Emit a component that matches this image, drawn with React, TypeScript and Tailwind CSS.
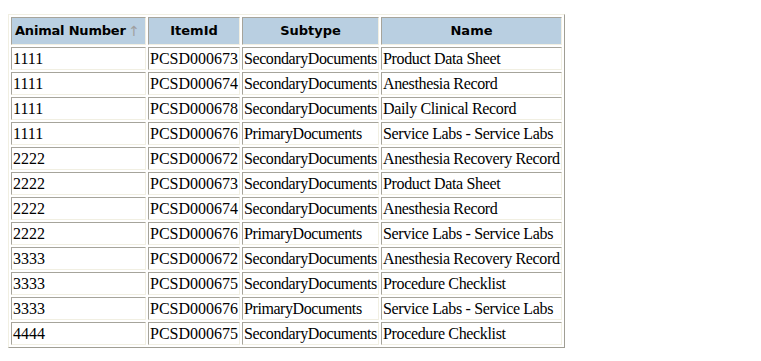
import React from 'react';

const rows: [string, string, string, string][] = [
  ['1111', 'PCSD000673', 'SecondaryDocuments', 'Product Data Sheet'],
  ['1111', 'PCSD000674', 'SecondaryDocuments', 'Anesthesia Record'],
  ['1111', 'PCSD000678', 'SecondaryDocuments', 'Daily Clinical Record'],
  ['1111', 'PCSD000676', 'PrimaryDocuments', 'Service Labs - Service Labs'],
  ['2222', 'PCSD000672', 'SecondaryDocuments', 'Anesthesia Recovery Record'],
  ['2222', 'PCSD000673', 'SecondaryDocuments', 'Product Data Sheet'],
  ['2222', 'PCSD000674', 'SecondaryDocuments', 'Anesthesia Record'],
  ['2222', 'PCSD000676', 'PrimaryDocuments', 'Service Labs - Service Labs'],
  ['3333', 'PCSD000672', 'SecondaryDocuments', 'Anesthesia Recovery Record'],
  ['3333', 'PCSD000675', 'SecondaryDocuments', 'Procedure Checklist'],
  ['3333', 'PCSD000676', 'PrimaryDocuments', 'Service Labs - Service Labs'],
  ['4444', 'PCSD000675', 'SecondaryDocuments', 'Procedure Checklist'],
];

// inset cell border: dark top/left, light bottom/right
const cellBorder =
  'border border-t-[#a6a49b] border-l-[#a6a49b] border-b-[#f1efe2] border-r-[#f1efe2]';

const headerCls = `${cellBorder} bg-[#b9cfe1] h-[28px] p-0 text-[13px] font-bold text-black font-['Comic_Sans_MS','DejaVu_Sans',sans-serif] whitespace-nowrap overflow-hidden`;

const cellCls = `${cellBorder} h-[23px] py-0 px-[1px] text-[16px] leading-[19px] text-black whitespace-nowrap overflow-hidden`;

const App: React.FC = () => {
  return (
    <div className="w-[761px] h-[361px] bg-white pt-[14px] pl-[8px] font-['Liberation_Serif',serif]">
      <table className="table-fixed w-[557px] border-separate border-spacing-[2px] border border-t-[#f1efe2] border-l-[#f1efe2] border-b-[#a09e94] border-r-[#a09e94]">
        <thead>
          <tr>
            <th className={`${headerCls} w-[135px] text-left pl-[3px]`}>
              <div className="flex items-center justify-between pr-[5px]">
                <span className="tracking-[-0.2px]">Animal Number</span>
                <span className="text-[#a0a0a0] font-normal text-[14px] leading-none">↑</span>
              </div>
            </th>
            <th className={`${headerCls} w-[92px] text-center`}>ItemId</th>
            <th className={`${headerCls} w-[137px] text-center`}>Subtype</th>
            <th className={`${headerCls} w-[181px] text-center`}>Name</th>
          </tr>
        </thead>
        <tbody>
          {rows.map((r, i) => (
            <tr key={i}>
              <td className={`${cellCls} text-left`}>{r[0]}</td>
              <td className={`${cellCls} text-left`}>{r[1]}</td>
              <td className={`${cellCls} text-left tracking-[-0.42px]`}>{r[2]}</td>
              <td className={`${cellCls} text-left tracking-[-0.35px]`}>{r[3]}</td>
            </tr>
          ))}
        </tbody>
      </table>
    </div>
  );
};

export default App;
